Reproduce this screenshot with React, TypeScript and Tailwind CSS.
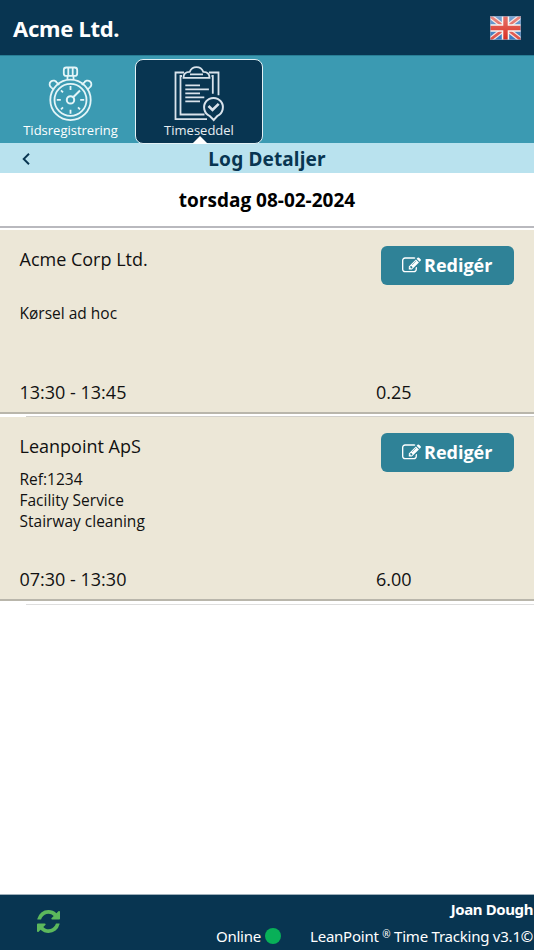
import React from "react";

const EditIcon = () => (
  <svg viewBox="0 0 1792 1792" className="h-[19px] w-[19px] shrink-0" fill="currentColor">
    <path d="M888 1184l116-116-152-152-116 116v56h96v96h56zm440-720q-16-16-33 1l-350 350q-17 17-1 33t33-1l350-350q17-17 1-33zm80 594v190q0 119-84.5 203.5t-203.5 84.5h-832q-119 0-203.5-84.5t-84.5-203.5v-832q0-119 84.5-203.5t203.5-84.5h832q63 0 117 25 15 7 18 23 3 17-9 29l-49 49q-14 14-32 8-23-6-45-6h-832q-66 0-113 47t-47 113v832q0 66 47 113t113 47h832q66 0 113-47t47-113v-126q0-13 9-22l64-64q15-15 35-7t20 29zm-96-738l288 288-672 672h-288v-288zm444 132l-92 92-288-288 92-92q28-28 68-28t68 28l152 152q28 28 28 68t-28 68z" />
  </svg>
);

const RefreshIcon = () => (
  <svg viewBox="128 128 1536 1536" className="h-[23px] w-[23px]" fill="#5cb85c">
    <path d="M1639 1056q0 5-1 7-64 268-268 434.5t-478 166.5q-146 0-282.5-55t-243.5-157l-129 129q-19 19-45 19t-45-19-19-45v-448q0-26 19-45t45-19h448q26 0 45 19t19 45-19 45l-137 137q71 66 161 102t187 36q134 0 250-65t186-179q11-17 53-117 8-23 30-23h192q13 0 22.5 9.5t9.5 22.5zm25-800v448q0 26-19 45t-45 19h-448q-26 0-45-19t-19-45 19-45l138-138q-148-137-349-137-134 0-250 65t-186 179q-11 17-53 117-8 23-30 23h-199q-13 0-22.5-9.5t-9.5-22.5v-7q65-268 270-434.5t480-166.5q146 0 284 55.5t245 156.5l130-129q19-19 45-19t45 19 19 45z" />
  </svg>
);

const Flag = () => (
  <svg viewBox="0 0 31 24" className="h-[24px] w-[31px]">
    <defs>
      <linearGradient id="gloss" x1="0" y1="0" x2="0" y2="1">
        <stop offset="0" stopColor="#fff" stopOpacity=".35" />
        <stop offset="1" stopColor="#fff" stopOpacity="0.02" />
      </linearGradient>
    </defs>
    <rect width="31" height="24" fill="#2f74bd" />
    <path d="M0 0L31 24M31 0L0 24" stroke="#f4dfdc" strokeWidth="5" />
    <path d="M0 0L31 24M31 0L0 24" stroke="#dc4a40" strokeWidth="2.6" />
    <path d="M15.5 0V24M0 12H31" stroke="#f8f2ee" strokeWidth="7.4" />
    <path d="M15.5 0V24M0 12H31" stroke="#d9291c" strokeWidth="4.4" />
    <rect width="31" height="24" fill="url(#gloss)" />
    <rect x=".5" y=".5" width="30" height="23" fill="none" stroke="#7e9dbc" strokeOpacity=".6" />
  </svg>
);

const Stopwatch = () => (
  <svg viewBox="48 65 45 57" className="h-[57px] w-[45px]" fill="none" stroke="#e4f5f8" strokeWidth="1.8">
    <circle cx="70.5" cy="99.9" r="20.2" />
    <circle cx="70.5" cy="99.9" r="16" />
    <circle cx="70.5" cy="99.9" r="3.7" strokeWidth="2" />
    <path d="M73.4 97L80 90.5" strokeWidth="2" />
    <path d="M70.5 86v4M70.5 109.7v4M56.8 99.9h4M80.2 99.9h4M61 90.4l2 2M61 109.4l2-2M80 109.4l-2-2" />
    <rect x="63.8" y="67.5" width="13.4" height="8.4" rx="2.5" />
    <path d="M68.3 67.5v8M72.7 67.5v8M67.5 76v4M73.5 76v4" />
    <path d="M51.7 87.8a3.8 3.8 0 1 1 5.3-4.6M84 83.2a3.8 3.8 0 1 1 5.3 4.6M57 82.6l2.2 2.2M84 82.6l-2.2 2.2M51.8 87.8l2 2M89.2 87.8l-2 2" />
  </svg>
);

const Clipboard = () => (
  <svg viewBox="173 65 52 57" className="h-[57px] w-[52px]" fill="none" stroke="#d9e3ec" strokeWidth="1.8">
    <path d="M184 72.5h-8.5v46.7h31.5M209 72.5h9.5v22.8M182 76h-1.5v38.5h24M211.5 76h1.3v17.8" />
    <path d="M183.5 77.8c0-4.7 2.3-5.8 6.2-5.9 1.4-3.4 3.1-4.7 6.8-4.7s5.4 1.3 6.8 4.7c3.9.1 6.2 1.2 6.2 5.9z" />
    <path d="M190 74.3h13M185.3 85.3H200M185.3 89.3h23.6M185.3 93.3H200M185.3 97.3h19M185.3 101.3H200" strokeWidth="1.8" />
    <path d="M209.5 115.8a9.4 9.4 0 1 1 8 0l-3.8 4.2z" strokeWidth="2" />
    <path d="M208.5 106l4 4 6.2-6.2" strokeWidth="2.6" />
  </svg>
);

const EditButton = () => (
  <button className="mr-5 mt-4 flex h-[38.5px] w-[133px] items-center rounded-[6px] bg-[#2f8297] pl-[21px] text-[18px] font-bold text-white">
    <EditIcon />
    <span className="ml-[3px]">Redigér</span>
  </button>
);

interface EntryProps {
  name: string;
  lines: string[];
  time: string;
  hours: string;
}

function Entry({ name, lines, time, hours }: EntryProps) {
  return (
    <section className="flex h-[184px] flex-col border-b-2 border-[#b9b6ab] bg-[#ece7d7]">
      <div className="flex h-[54px] justify-between">
        <h2 className="ml-[19.5px] mt-[16px] text-[18px] leading-[26px]">{name}</h2>
        <EditButton />
      </div>
      <div className="ml-[19.5px] flex h-[84px] flex-col text-[15.5px] leading-[21px]">
        <div className={lines.length === 1 ? "mt-[19px]" : "-mt-[2px]"}>
          {lines.map((l) => (
            <p key={l}>{l}</p>
          ))}
        </div>
      </div>
      <div className="flex pt-[11px] text-[18px] leading-[26px]">
        <span className="ml-[19.5px] w-[356.5px]">{time}</span>
        <span>{hours}</span>
      </div>
    </section>
  );
}

export default function App() {
  return (
    <div className="flex h-[950px] w-[534px] flex-col overflow-hidden bg-white font-['Open_Sans','Noto_Sans',sans-serif] text-[#111]">
      <header className="flex h-[55px] shrink-0 items-center justify-between bg-[#083551] pl-[13px] pr-[13px] font-['Noto_Sans',sans-serif] text-white">
        <h1 className="mt-[2px] text-[22px] font-bold tracking-[-0.3px]">Acme Ltd.</h1>
        <Flag />
      </header>
      <nav className="flex h-[88px] shrink-0 border-t border-[#287e95] bg-[#3b9ab2] text-white">
        <div className="ml-[6px] flex w-[129px] flex-col items-center pt-[9px]">
          <Stopwatch />
          <span className="-mt-[1px] text-[13px] leading-[18px]">Tidsregistrering</span>
        </div>
        <div className="relative mt-[3px] flex h-[85px] w-[128px] flex-col items-center rounded-[8px] border-[1.5px] border-[#e2f1f5] bg-[#083551] pt-[5px]">
          <Clipboard />
          <span className="-mt-[1px] text-[13px] leading-[18px] text-[#e6edf2]">Timeseddel</span>
          <svg viewBox="0 0 16 8" className="absolute bottom-[-1px] left-[56px] h-[8px] w-[16px]">
            <path d="M0 8L8 0l8 8z" fill="#fff" />
          </svg>
        </div>
      </nav>
      <div className="flex h-[30px] shrink-0 items-center bg-[#b9e2ee] font-['Noto_Sans',sans-serif] text-[#083551]">
        <svg viewBox="0 0 8 12" className="ml-[22px] mt-[2px] h-[12px] w-[8px]" fill="none" stroke="currentColor" strokeWidth="1.9">
          <path d="M7 .8L1.7 6 7 11.2" />
        </svg>
        <h2 className="mr-[30px] mt-[2px] flex-1 text-center text-[19px] font-bold tracking-[0.15px]">Log Detaljer</h2>
      </div>
      <div className="flex h-[55px] shrink-0 items-center justify-center border-b-2 border-[#b9b9be] pt-[2px] text-[19px] font-bold text-black">
        torsdag 08-02-2024
      </div>
      <main className="flex flex-1 flex-col pt-[2px]">
        <Entry name="Acme Corp Ltd." lines={["Kørsel ad hoc"]} time="13:30 - 13:45" hours="0.25" />
        <div className="ml-[26px] mt-[2px] h-px bg-[#d2d0ca]" />
        <Entry
          name="Leanpoint ApS"
          lines={["Ref:1234", "Facility Service", "Stairway cleaning"]}
          time="07:30 - 13:30"
          hours="6.00"
        />
        <div className="ml-[26px] mt-[3px] h-px bg-[#dedede]" />
      </main>
      <footer className="flex h-[56px] shrink-0 justify-between border-t border-[#9fb0bb] bg-[#083551] font-['Noto_Sans',sans-serif] text-white">
        <div className="pl-[37px] pt-[15px]">
          <RefreshIcon />
        </div>
        <div className="flex flex-col items-end pr-[1px]">
          <strong className="mt-[3px] text-[15px] leading-[22px] tracking-[-0.4px]">Joan Dough</strong>
          <div className="mt-[5px] flex items-center text-[15px] leading-[22px] tracking-[-0.23px]">
            <span>Online</span>
            <span className="ml-[4px] h-[16px] w-[16px] rounded-full bg-[#08b058]" />
            <span className="ml-[29px] whitespace-nowrap">
              LeanPoint <span className="align-[4px] text-[10px] leading-none">®</span> Time Tracking v3.1©
            </span>
          </div>
        </div>
      </footer>
    </div>
  );
}
